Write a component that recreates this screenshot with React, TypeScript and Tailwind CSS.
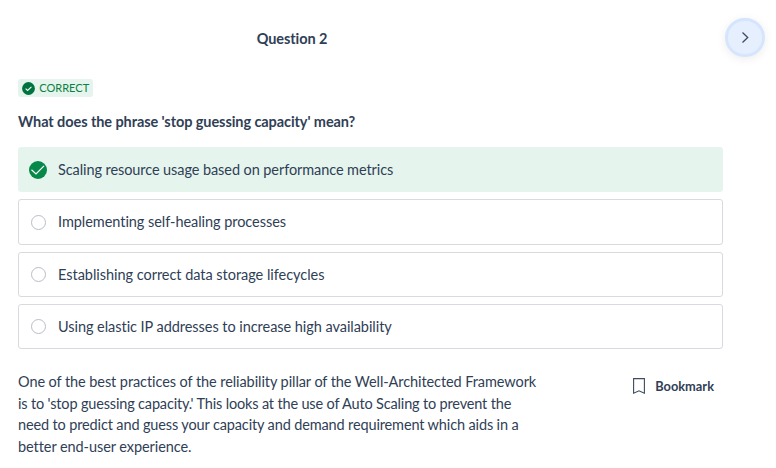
const answers = [
  { text: 'Scaling resource usage based on performance metrics', correct: true, height: 'h-[45px]', spacing: 'tracking-[-0.085px]' },
  { text: 'Implementing self-healing processes', correct: false, height: 'h-[46px]', spacing: 'tracking-[-0.05px]' },
  { text: 'Establishing correct data storage lifecycles', correct: false, height: 'h-[45px]', spacing: 'tracking-[-0.035px] pt-px' },
  { text: 'Using elastic IP addresses to increase high availability', correct: false, height: 'h-[45px]', spacing: 'tracking-[-0.05px]' },
];

const explanation = [
  { text: 'One of the best practices of the reliability pillar of the Well-Architected Framework', spacing: 'tracking-[-0.08px]' },
  { text: "is to 'stop guessing capacity.' This looks at the use of Auto Scaling to prevent the", spacing: 'tracking-[-0.165px]' },
  { text: 'need to predict and guess your capacity and demand requirement which aids in a', spacing: 'tracking-[-0.135px]' },
  { text: 'better end-user experience.', spacing: 'tracking-[-0.07px]' },
];

export default function App() {
  return (
    <main className="h-[468px] w-[776px] overflow-hidden bg-white font-['Lato',sans-serif] text-[14.5px] tracking-[-0.08px] text-[#2f4056]">
      <header className="flex h-[79px] items-start pl-[18px] pr-[11px]">
        <h1 className="mt-[28px] w-[548px] text-center leading-[22px] font-bold">Question 2</h1>
        <button aria-label="Next question" className="mt-[18px] ml-auto flex h-[39px] w-10 items-center justify-center rounded-full border-3 border-[#d5e5fd] bg-[#e6effe] shadow-[0_2px_10px_rgba(0,0,0,0.08)]">
          <svg viewBox="0 0 16 16" className="size-4" fill="none" stroke="#3c4b60" strokeWidth="1.3"><path d="m5.5 2.5 5.2 5-5.2 5" /></svg>
        </button>
      </header>
      <section className="w-[723px] pl-[18px]">
        <div className="flex h-[18px] w-[75px] items-center gap-[4.3px] rounded-[3px] bg-[#e5f5ed] pl-1 text-[11px] tracking-[0.01px] text-[#0a8043]">
          <svg viewBox="0 0 13 13" className="size-[13px]" fill="none">
            <circle cx="6.5" cy="6.5" r="6.4" fill="#00743f" />
            <path d="m3.6 6.6 2 1.8 3.8-3.6" stroke="white" strokeWidth="1.1" />
          </svg>
          CORRECT
        </div>
        <h2 className="mt-[14px] leading-[22px] font-bold">What does the phrase 'stop guessing capacity' mean?</h2>
        <div className="mt-[14px] flex flex-col gap-[7px]">
          {answers.map((a) => (
            <div key={a.text} className={`flex items-center gap-[11px] rounded-[3px] border pl-[10px] ${a.height} ${a.correct ? 'border-[#e5f5ed] bg-[#e5f5ed]' : 'border-[#d8dae0]'}`}>
              {a.correct ? (
                <svg viewBox="0 0 18 18" className="size-[18px]" fill="none">
                  <circle cx="9" cy="9" r="9" fill="#058848" />
                  <path d="m2.5 8.8 4.5 4.1 8-8" stroke="white" strokeWidth="1.2" />
                </svg>
              ) : (
                <span className="mr-px ml-[2px] size-[15px] rounded-full border border-[#b9bdc8]" />
              )}
              <span className={a.spacing}>{a.text}</span>
            </div>
          ))}
        </div>
        <div className="mt-[22px] flex items-start justify-between">
          <p className="w-[540px] leading-[21.6px]">
            {explanation.map((line) => (
              <span key={line.text} className={`block ${line.spacing}`}>{line.text}</span>
            ))}
          </p>
          <button className="mt-[5px] mr-[9px] flex items-center gap-[10px] text-[12.8px] leading-[20px] font-bold tracking-[0.01px]">
            <svg viewBox="0 0 12 16" className="h-4 w-3" fill="none" stroke="#3c4b60" strokeWidth="1.1"><path d="M.6.6h10.8v14.6L6 12.8.6 15.2z" /></svg>
            Bookmark
          </button>
        </div>
      </section>
    </main>
  );
}
